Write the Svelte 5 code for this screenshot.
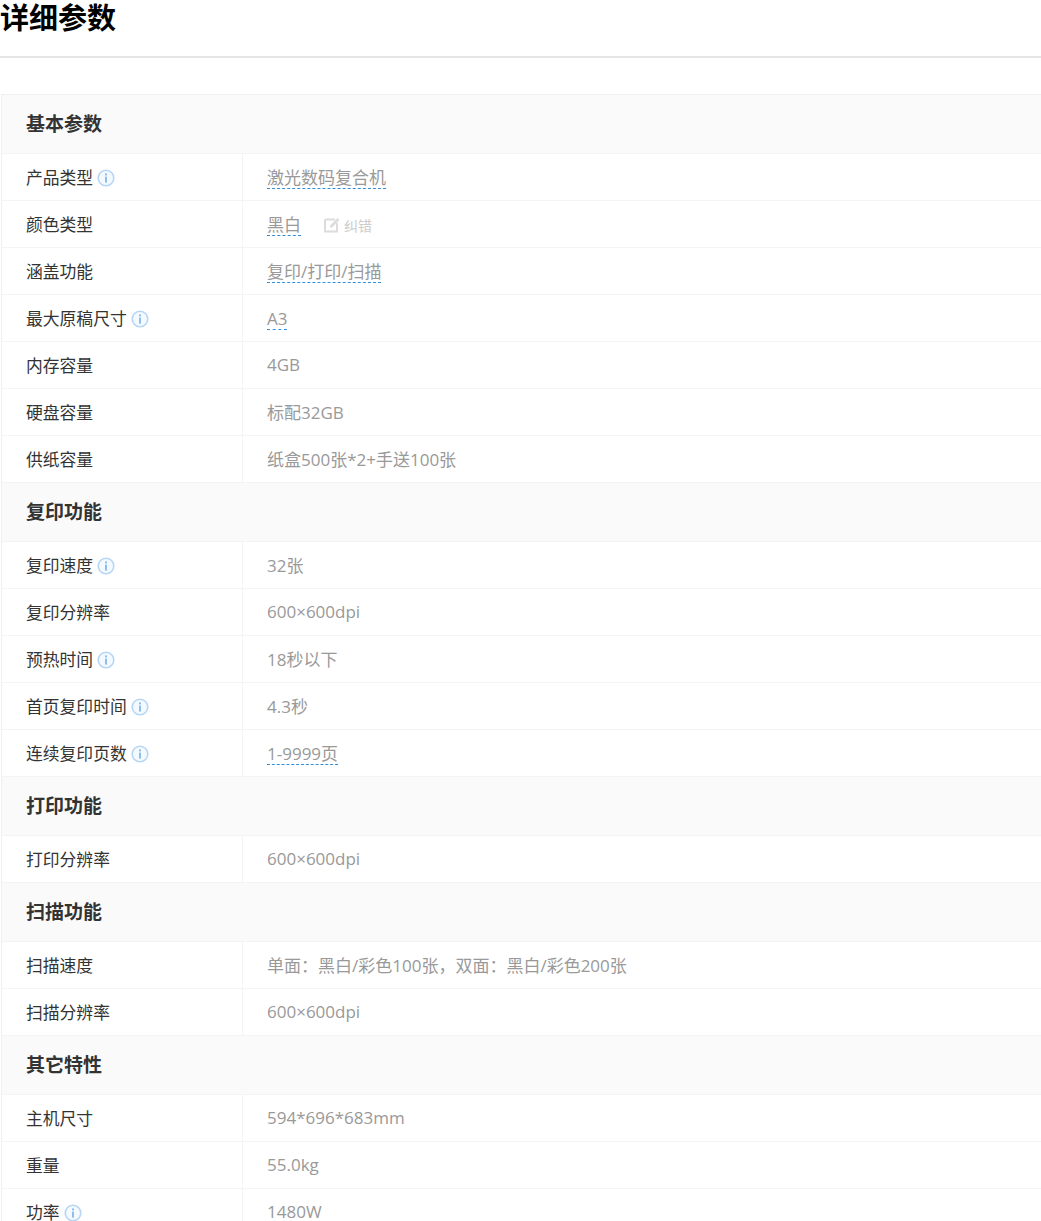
<script>
  const sections = [
    {
      title: "基本参数",
      rows: [
        { name: "产品类型", tip: true, value: "激光数码复合机", link: true },
        { name: "颜色类型", value: "黑白", link: true, fix: true },
        { name: "涵盖功能", value: "复印/打印/扫描", link: true },
        { name: "最大原稿尺寸", tip: true, value: "A3", link: true },
        { name: "内存容量", value: "4GB" },
        { name: "硬盘容量", value: "标配32GB" },
        { name: "供纸容量", value: "纸盒500张*2+手送100张" },
      ],
    },
    {
      title: "复印功能",
      rows: [
        { name: "复印速度", tip: true, value: "32张" },
        { name: "复印分辨率", value: "600×600dpi" },
        { name: "预热时间", tip: true, value: "18秒以下" },
        { name: "首页复印时间", tip: true, value: "4.3秒" },
        { name: "连续复印页数", tip: true, value: "1-9999页", link: true },
      ],
    },
    {
      title: "打印功能",
      rows: [{ name: "打印分辨率", value: "600×600dpi" }],
    },
    {
      title: "扫描功能",
      rows: [
        { name: "扫描速度", value: "单面：黑白/彩色100张，双面：黑白/彩色200张" },
        { name: "扫描分辨率", value: "600×600dpi" },
      ],
    },
    {
      title: "其它特性",
      rows: [
        { name: "主机尺寸", value: "594*696*683mm" },
        { name: "重量", value: "55.0kg" },
        { name: "功率", tip: true, value: "1480W" },
      ],
    },
  ];
</script>

<div class="page">
  <h2>详细参数</h2>

  <div class="params">
    {#each sections as section}
      <div class="section-title">{section.title}</div>
      {#each section.rows as row}
        <div class="row">
          <div class="name">
            {row.name}
            {#if row.tip}
              <svg class="tip" viewBox="0 0 18 18" width="18" height="18">
                <circle cx="9" cy="9" r="7.8" fill="#f4f9fe" stroke="#b5d6f5" stroke-width="1.6" />
                <rect x="8" y="4.4" width="2" height="2" fill="#8dbfee" />
                <rect x="8" y="7.6" width="2" height="6" fill="#8dbfee" />
              </svg>
            {/if}
          </div>
          <div class="value">
            {#if row.link}
              <span class="link">{row.value}</span>
            {:else}
              {row.value}
            {/if}
            {#if row.fix}
              <span class="fix">
                <svg viewBox="0 0 16 16" width="16" height="16">
                  <path d="M1 2.500h10M1 2.500v12h12V6" stroke="#dcdcdc" stroke-width="2" fill="none" />
                  <path d="M14.500 2L6.500 10" stroke="#dcdcdc" stroke-width="2.600" fill="none" />
                </svg>
                纠错
              </span>
            {/if}
          </div>
        </div>
      {/each}
    {/each}
  </div>
</div>

<style>
  :global(body) {
    margin: 0;
    background: #fff;
    overflow: hidden;
  }

  .page {
    width: 1041px;
    font-family: "Open Sans", "Noto Sans CJK SC", sans-serif;
  }

  h2 {
    margin: 0;
    height: 56px;
    font-family: "Noto Sans CJK SC", sans-serif;
    font-size: 29px;
    line-height: 32px;
    font-weight: 700;
    color: #000;
    border-bottom: 2px solid #e5e5e5;
  }

  .params {
    margin: 36px 0 0 1px;
    border-top: 1px solid #f0f0f0;
    border-left: 1px solid #f0f0f0;
  }

  .section-title {
    box-sizing: border-box;
    height: 59px;
    padding: 1px 0 0 24px;
    font-size: 19px;
    line-height: 57px;
    font-weight: 700;
    color: #333;
    background: #fafafa;
    border-bottom: 1px solid #f4f4f4;
  }

  .row {
    display: flex;
    height: 46px;
    border-bottom: 1px solid #f4f4f4;
  }

  .name {
    display: flex;
    align-items: center;
    gap: 4px;
    box-sizing: border-box;
    width: 241px;
    padding-left: 24px;
    font-size: 16.8px;
    color: #333;
    border-right: 1px solid #f4f4f4;
  }

  .tip {
    flex: none;
    margin-top: 1px;
  }

  .value {
    display: flex;
    align-items: center;
    box-sizing: border-box;
    padding: 0 0 2px 24px;
    font-size: 17px;
    color: #999;
  }

  .link {
    border-bottom: 1px dashed #2f8fdc;
    line-height: 21px;
    margin-top: 4px;
  }

  .fix {
    display: inline-flex;
    align-items: center;
    gap: 4px;
    margin-left: 23px;
    margin-top: 3px;
    font-size: 14px;
    color: #ccc;
  }
</style>
